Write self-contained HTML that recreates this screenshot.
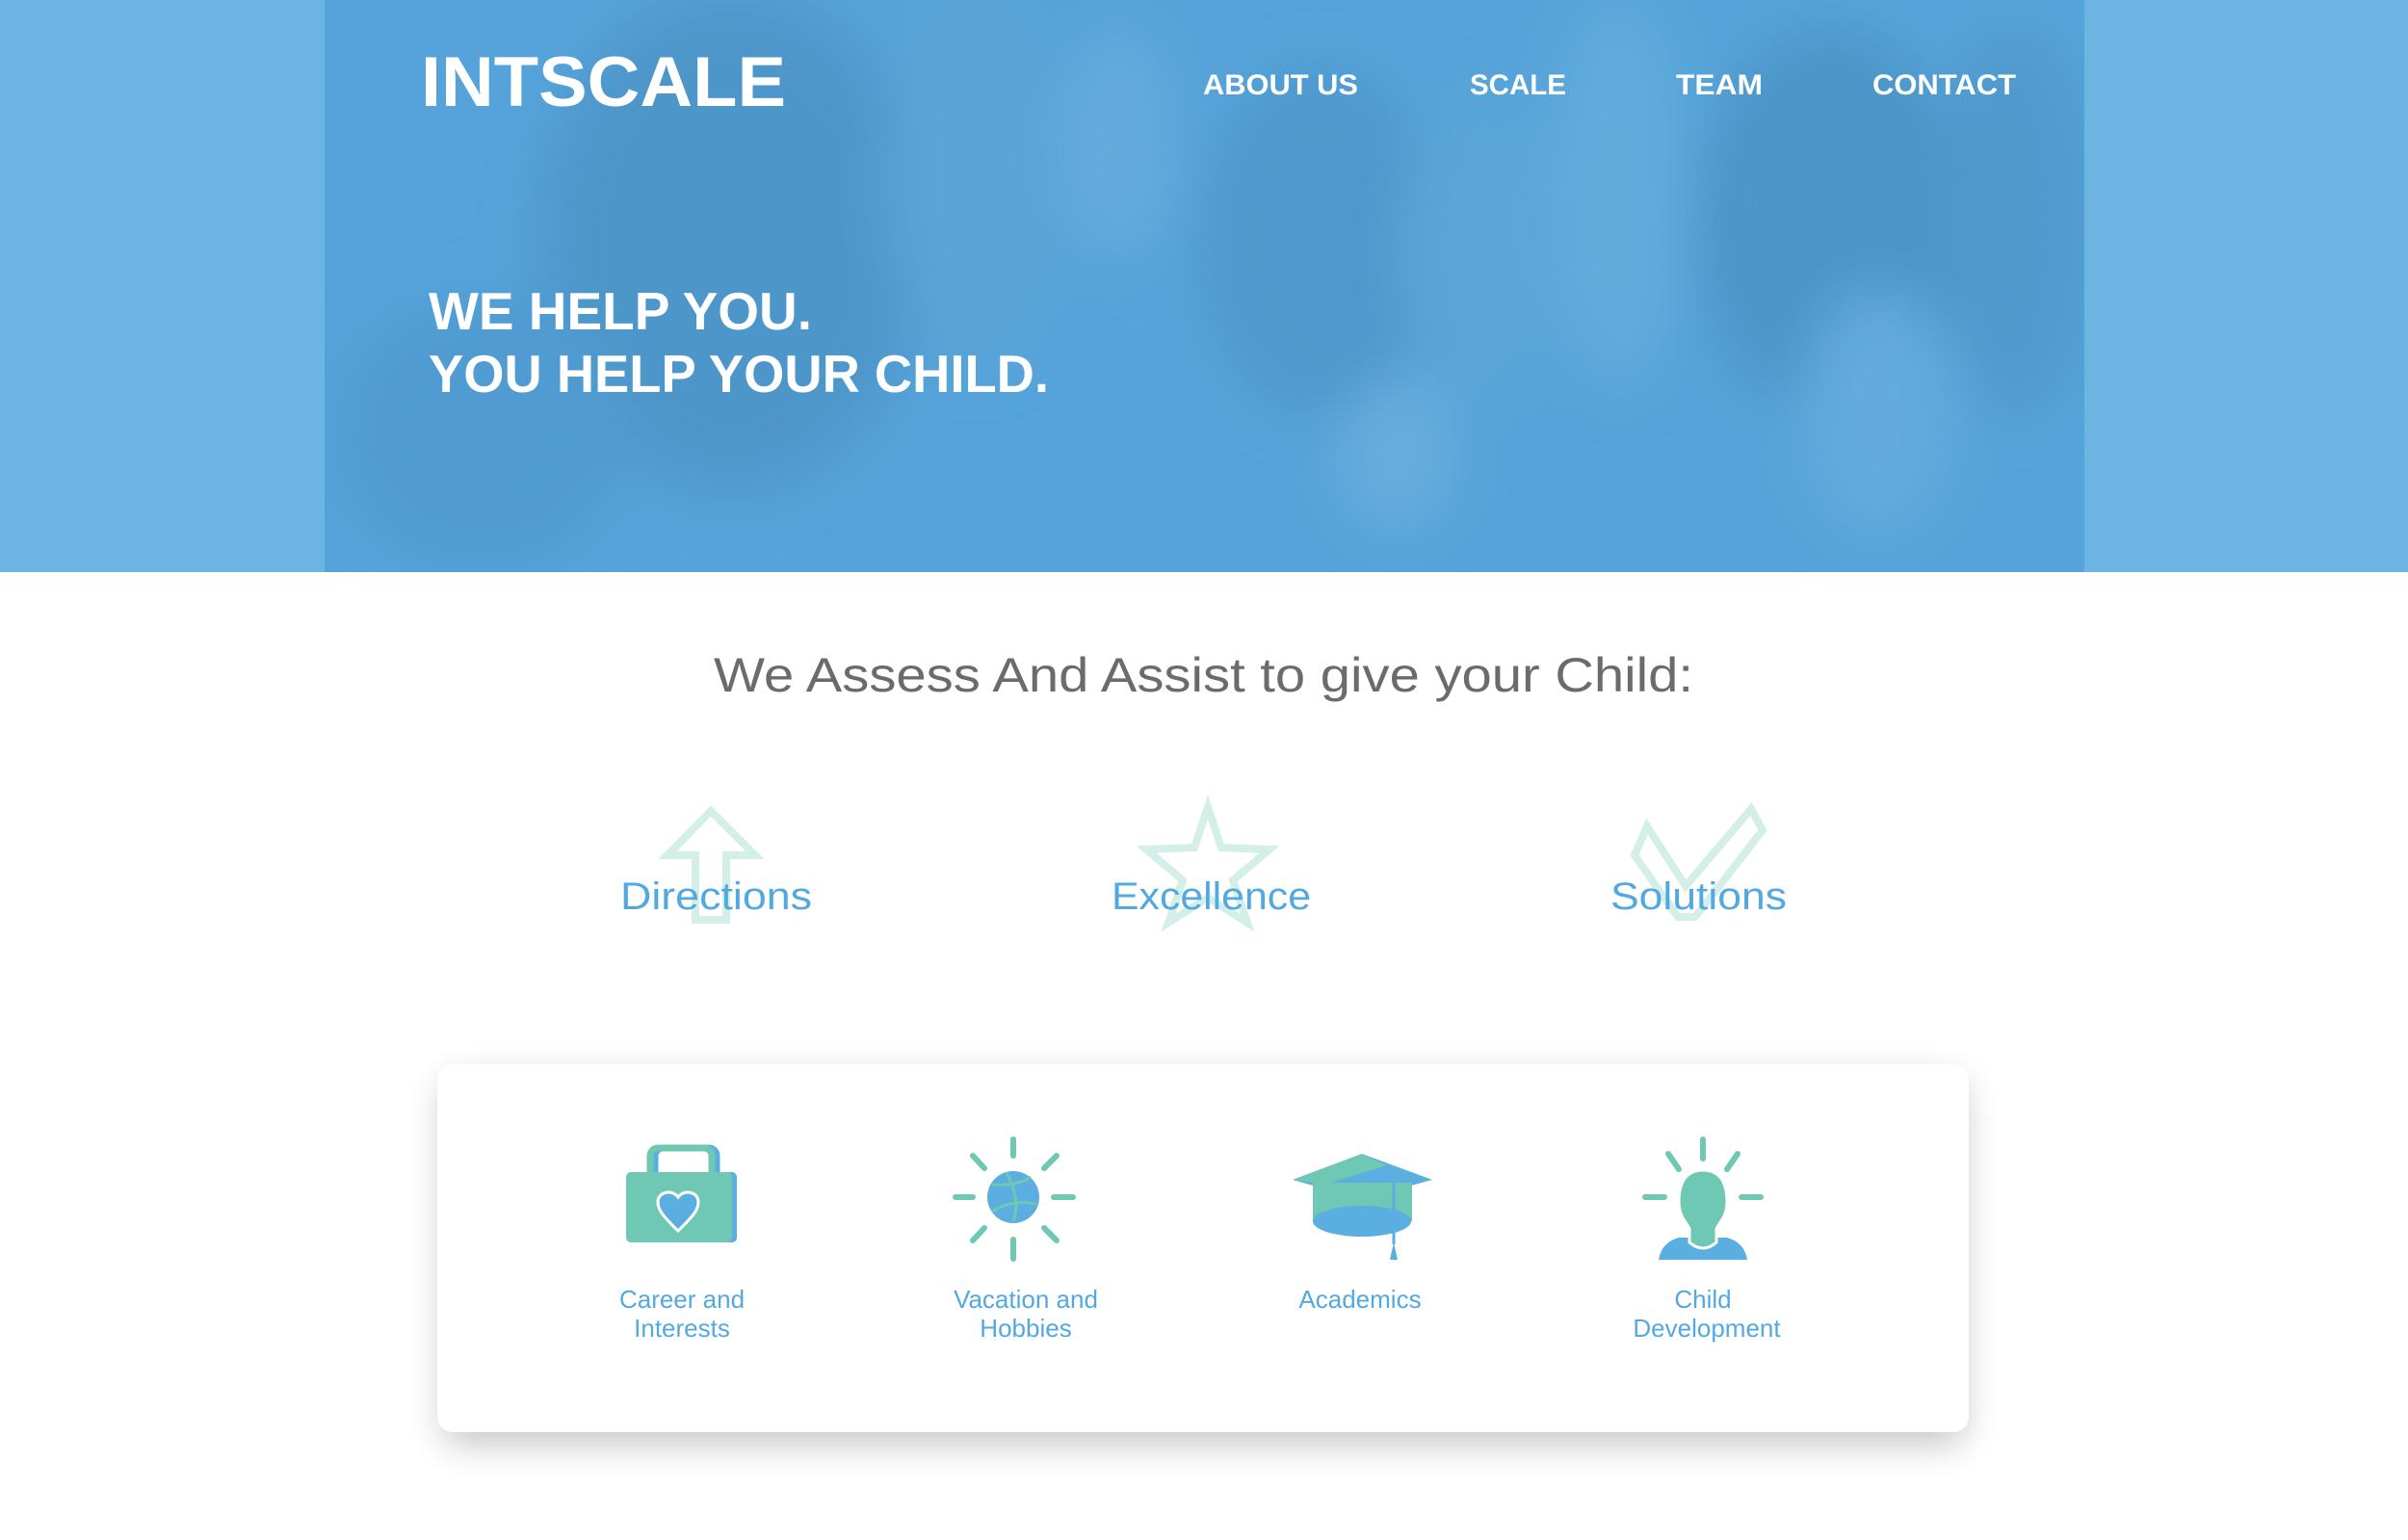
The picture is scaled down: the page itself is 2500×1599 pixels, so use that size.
<!DOCTYPE html>
<html><head><meta charset="utf-8"><style>html,body{margin:0;padding:0;background:#fff}svg{display:block}</style></head>
<body>
<svg width="2500" height="1599" viewBox="0 0 2500 1599" xmlns="http://www.w3.org/2000/svg" font-family="Liberation Sans, sans-serif">
<defs>
<filter id="bl" x="-50%" y="-50%" width="200%" height="200%"><feGaussianBlur stdDeviation="28"/></filter>
<filter id="sh" x="-10%" y="-20%" width="120%" height="150%"><feGaussianBlur stdDeviation="18"/></filter>
<clipPath id="pc"><rect x="337" y="0" width="1827" height="594"/></clipPath>
</defs>
<rect width="2500" height="1599" fill="#fff"/>
<rect width="2500" height="594" fill="#6cb5e2"/>
<g clip-path="url(#pc)">
<rect x="337" y="0" width="1827" height="594" fill="#55a3da"/>
<g filter="url(#bl)">
<ellipse cx="760" cy="250" rx="200" ry="260" fill="#4d96ca"/>
<ellipse cx="1010" cy="180" rx="90" ry="200" fill="#5aa5d6"/>
<ellipse cx="1370" cy="250" rx="120" ry="180" fill="#4e98cc"/>
<ellipse cx="1540" cy="260" rx="90" ry="160" fill="#5aa6d8"/>
<ellipse cx="1900" cy="230" rx="140" ry="200" fill="#4b95c8"/>
<ellipse cx="1680" cy="200" rx="70" ry="200" fill="#62acdc"/>
<ellipse cx="1160" cy="150" rx="60" ry="120" fill="#63abdc"/>
<ellipse cx="1950" cy="430" rx="80" ry="130" fill="#62abdc"/>
<ellipse cx="2090" cy="230" rx="80" ry="200" fill="#4f99cd"/>
<ellipse cx="500" cy="450" rx="150" ry="140" fill="#509bd2"/>
<ellipse cx="1450" cy="470" rx="60" ry="80" fill="#68addc"/>
</g>
</g>
<text x="437" y="110" fill="#fff" font-weight="bold" font-size="73" textLength="379" lengthAdjust="spacingAndGlyphs">INTSCALE</text>
<g fill="#fff" font-weight="bold" font-size="30">
<text x="1249" y="98" textLength="161" lengthAdjust="spacingAndGlyphs">ABOUT US</text>
<text x="1526" y="98" textLength="100" lengthAdjust="spacingAndGlyphs">SCALE</text>
<text x="1740" y="98" textLength="90" lengthAdjust="spacingAndGlyphs">TEAM</text>
<text x="1944" y="98" textLength="149" lengthAdjust="spacingAndGlyphs">CONTACT</text>
</g>
<g fill="#fff" font-weight="bold" font-size="55">
<text x="445" y="342" textLength="398" lengthAdjust="spacingAndGlyphs">WE HELP YOU.</text>
<text x="445" y="407" textLength="644" lengthAdjust="spacingAndGlyphs">YOU HELP YOUR CHILD.</text>
</g>
<text x="741" y="718" fill="#6b6b6b" font-size="50" textLength="1017" lengthAdjust="spacingAndGlyphs">We Assess And Assist to give your Child:</text>
<g stroke-linejoin="miter" fill="none">
<path d="M738 842 L693 888 L722 888 L722 955 L754 955 L754 888 L784 888 Z" stroke="#d4eee8" stroke-width="8"/>
<path d="M1254 838 L1268 880 L1318 882 L1280 914 L1295 958 L1254 932 L1213 958 L1228 914 L1190 882 L1240 880 Z" stroke="#d4eee8" stroke-width="8"/>
<path d="M1697 888 L1710 858 L1750 920 L1818 840 L1830 862 L1760 952 L1742 952 Z" stroke="#d4eee8" stroke-width="8"/>
</g>
<g fill="#52a9e0" font-size="40">
<text x="644" y="944" textLength="199" lengthAdjust="spacingAndGlyphs">Directions</text>
<text x="1154" y="944" textLength="207" lengthAdjust="spacingAndGlyphs">Excellence</text>
<text x="1672" y="944" textLength="183" lengthAdjust="spacingAndGlyphs">Solutions</text>
</g>
<rect x="460" y="1120" width="1580" height="380" rx="18" fill="#000" opacity="0.22" filter="url(#sh)"/>
<rect x="454" y="1105" width="1590" height="382" rx="16" fill="#fff"/>
<g>
<path d="M680 1217 V1200 a8 8 0 0 1 8 -8 H736 a8 8 0 0 1 8 8 V1217" stroke="#5aaee0" stroke-width="7" fill="none"/>
<path d="M675 1217 V1200 a8 8 0 0 1 8 -8 H731 a8 8 0 0 1 8 8 V1217" stroke="#6fc8b3" stroke-width="7" fill="none"/>
<rect x="655" y="1217" width="110" height="73" rx="5" fill="#5aaee0"/>
<rect x="650" y="1217" width="110" height="73" rx="5" fill="#6fc8b3"/>
<path d="M704 1278 C692 1266 683 1258 683 1248 C683 1238 697 1234 704 1243 C711 1234 725 1238 725 1248 C725 1258 716 1266 704 1278 Z" fill="#5aaee0" stroke="#fff" stroke-width="3"/>
</g>
<g stroke="#6fc8b3" stroke-width="6" stroke-linecap="round">
<line x1="1052" y1="1183" x2="1052" y2="1200"/><line x1="1052" y1="1287" x2="1052" y2="1307"/>
<line x1="992" y1="1243" x2="1010" y2="1243"/><line x1="1094" y1="1243" x2="1114" y2="1243"/>
<line x1="1010" y1="1200" x2="1022" y2="1213"/><line x1="1097" y1="1200" x2="1084" y2="1213"/>
<line x1="1010" y1="1288" x2="1022" y2="1275"/><line x1="1097" y1="1288" x2="1084" y2="1275"/>
</g>
<ellipse cx="1052" cy="1243" rx="27" ry="27" fill="#5aaee0"/>
<path d="M1030 1230 Q1055 1232 1070 1222 M1030 1258 Q1050 1245 1076 1250 M1045 1218 Q1060 1245 1052 1268" stroke="#6fc8b3" stroke-width="3" fill="none"/>
<path d="M1342 1225 L1414 1198 L1487 1225 L1414 1245 Z" fill="#5aaee0"/>
<path d="M1342 1225 L1414 1198 L1440 1210 L1375 1230 Z" fill="#6fc8b3"/>
<rect x="1363" y="1228" width="103" height="40" fill="#6fc8b3"/>
<ellipse cx="1414" cy="1268" rx="51" ry="16" fill="#5aaee0"/>
<line x1="1447" y1="1215" x2="1447" y2="1292" stroke="#5aaee0" stroke-width="3"/>
<path d="M1443 1308 L1447 1290 L1451 1308 Z" fill="#5aaee0"/>
<g stroke="#6fc8b3" stroke-width="6" stroke-linecap="round">
<line x1="1768" y1="1183" x2="1768" y2="1203"/>
<line x1="1708" y1="1243" x2="1728" y2="1243"/><line x1="1808" y1="1243" x2="1828" y2="1243"/>
<line x1="1732" y1="1198" x2="1743" y2="1214"/><line x1="1804" y1="1198" x2="1793" y2="1214"/>
</g>
<path d="M1722 1308 Q1725 1290 1743 1285 L1793 1285 Q1811 1290 1814 1308 Z" fill="#5aaee0"/>
<path d="M1768 1215 C1750 1215 1743 1228 1743 1248 C1743 1264 1752 1270 1754 1276 L1754 1290 Q1768 1302 1782 1290 L1782 1276 C1784 1270 1793 1264 1793 1248 C1793 1228 1786 1215 1768 1215 Z" fill="#6fc8b3" stroke="#fff" stroke-width="3"/>
<g fill="#52a9e0" font-size="26" text-anchor="middle">
<text x="708" y="1358">Career and</text><text x="708" y="1388">Interests</text>
<text x="1065" y="1358">Vacation and</text><text x="1065" y="1388">Hobbies</text>
<text x="1412" y="1358">Academics</text>
<text x="1768" y="1358">Child</text><text x="1772" y="1388">Development</text>
</g>
</svg>
</body></html>
